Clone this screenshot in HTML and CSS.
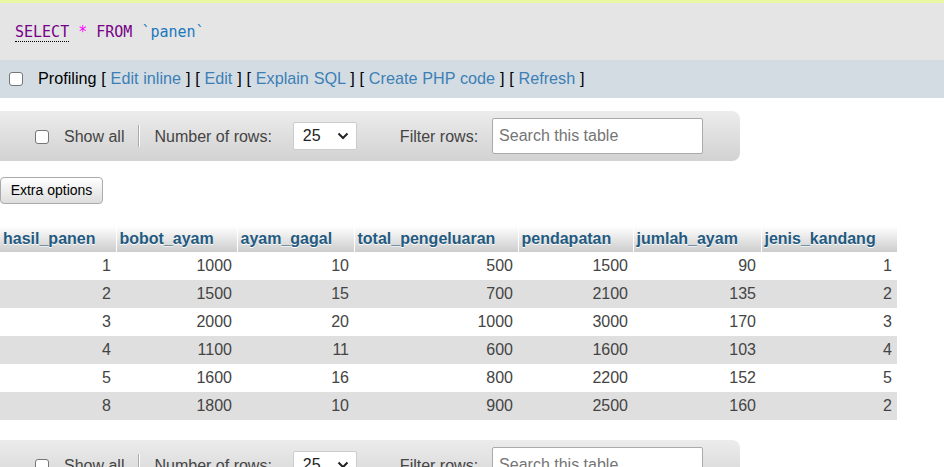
FILE: index.html
```html
<!DOCTYPE html>
<html>
<head>
<meta charset="utf-8">
<link rel="stylesheet" href="styles.css">
</head>
<body>
<div class="topstrip"></div>
<div class="sqlbox">
  <code class="sql"><abbr class="kw kw-abbr">SELECT</abbr> <span class="op">*</span> <span class="kw">FROM</span> <span class="ident">`panen`</span></code>
</div>
<div class="profbar">
  <input type="checkbox" class="cb">
  <span class="proftext"><span class="proflabel">Profiling</span> [ <a class="lnk">Edit inline</a> ] [ <a class="lnk">Edit</a> ] [ <a class="lnk">Explain SQL</a> ] [ <a class="lnk">Create PHP code</a> ] [ <a class="lnk">Refresh</a> ]</span>
</div>

<div class="navbar">
  <label class="showall"><input type="checkbox" class="cb"> <span>Show all</span></label>
  <span class="sep"></span>
  <span class="lbl">Number of rows:</span>
  <div class="select"><span>25</span><svg width="12" height="8" viewBox="0 0 12 8"><path d="M1.5 1.5 L6 6 L10.5 1.5" fill="none" stroke="#222" stroke-width="2"/></svg></div>
  <span class="lbl filterlbl">Filter rows:</span>
  <div class="search">Search this table</div>
</div>

<div class="extra"><button class="btn">Extra options</button></div>

<table class="data">
  <colgroup>
    <col style="width:116px"><col style="width:121px"><col style="width:117px"><col style="width:164px"><col style="width:115px"><col style="width:128px"><col style="width:136px">
  </colgroup>
  <thead>
    <tr><th>hasil_panen</th><th>bobot_ayam</th><th>ayam_gagal</th><th>total_pengeluaran</th><th>pendapatan</th><th>jumlah_ayam</th><th>jenis_kandang</th></tr>
  </thead>
  <tbody>
    <tr><td>1</td><td>1000</td><td>10</td><td>500</td><td>1500</td><td>90</td><td>1</td></tr>
    <tr><td>2</td><td>1500</td><td>15</td><td>700</td><td>2100</td><td>135</td><td>2</td></tr>
    <tr><td>3</td><td>2000</td><td>20</td><td>1000</td><td>3000</td><td>170</td><td>3</td></tr>
    <tr><td>4</td><td>1100</td><td>11</td><td>600</td><td>1600</td><td>103</td><td>4</td></tr>
    <tr><td>5</td><td>1600</td><td>16</td><td>800</td><td>2200</td><td>152</td><td>5</td></tr>
    <tr><td>8</td><td>1800</td><td>10</td><td>900</td><td>2500</td><td>160</td><td>2</td></tr>
  </tbody>
</table>

<div class="navbar bottom">
  <label class="showall"><input type="checkbox" class="cb"> <span>Show all</span></label>
  <span class="sep"></span>
  <span class="lbl">Number of rows:</span>
  <div class="select"><span>25</span><svg width="12" height="8" viewBox="0 0 12 8"><path d="M1.5 1.5 L6 6 L10.5 1.5" fill="none" stroke="#222" stroke-width="2"/></svg></div>
  <span class="lbl filterlbl">Filter rows:</span>
  <div class="search">Search this table</div>
</div>
</body>
</html>
```
FILE: styles.css
```css
html, body {
  margin: 0;
  padding: 0;
  background: #fff;
  font-family: "Liberation Sans", Arial, sans-serif;
  font-size: 16px;
  color: #444;
  overflow: hidden;
}
.topstrip {
  height: 3px;
  background: #e9f7a2;
}
.sqlbox {
  height: 57px;
  background: #e5e5e5;
  display: flex;
  align-items: center;
  padding-left: 15px;
  box-sizing: border-box;
}
.sql {
  font-family: "DejaVu Sans Mono", monospace;
  font-size: 15px;
  letter-spacing: 0;
  margin-top: 1px;
}
.kw { color: #770088; }
.kw-abbr {
  text-decoration: none;
  border-bottom: 1px dotted #000;
}
.op { color: #f0f; }
.ident { color: #1a78bd; }

.profbar {
  height: 38px;
  background: #d3dce3;
  display: flex;
  align-items: center;
  padding-left: 9px;
  color: #000;
}
.proftext {
  white-space: pre;
  color: #000;
  font-size: 16.2px;
  word-spacing: 0.3px;
  margin-bottom: 2px;
}
.cb {
  width: 14px;
  height: 14px;
  margin: 0;
  appearance: none;
  -webkit-appearance: none;
  border: 1px solid #767676;
  border-radius: 3px;
  background: #fff;
  box-sizing: border-box;
  flex: none;
}
.profbar .cb { margin-right: 15px; }
.proflabel { color: #000; }
.lnk { color: #3d7fb5; text-decoration: none; }

.navbar {
  margin-top: 13px;
  width: 740px;
  height: 50px;
  box-sizing: border-box;
  border-radius: 0 8px 8px 0;
  background: linear-gradient(#ececec, #d2d2d2);
  display: flex;
  align-items: center;
  padding-left: 35px;
}
.navbar.bottom { margin-top: 20px; }
.showall {
  display: flex;
  align-items: center;
  color: #444;
  padding-top: 1px;
}
.showall .cb { margin-right: 15px; }
.sep {
  width: 1px;
  height: 22px;
  background: #aaa;
  border-right: 1px solid #fff;
  margin: 0 14px 0 14px;
}
.lbl { color: #444; padding-top: 1px; }
.select {
  margin-left: 21px;
  width: 64px;
  height: 28px;
  box-sizing: border-box;
  background: #fff;
  border: 1px solid #ccc;
  border-radius: 2px;
  display: flex;
  align-items: center;
  justify-content: space-between;
  padding: 0 7px 0 9px;
  color: #222;
}
.filterlbl { margin-left: 43px; }
.search {
  margin-left: 14px;
  width: 211px;
  height: 36px;
  box-sizing: border-box;
  background: #fff;
  border: 1px solid #aaa;
  border-radius: 2px;
  display: flex;
  align-items: center;
  padding-left: 6px;
  color: #757575;
}

.extra { margin-top: 16px; }
.btn {
  font-family: "Liberation Sans", Arial, sans-serif;
  font-size: 14px;
  color: #000;
  height: 27px;
  width: 103px;
  padding: 0 0 1px 0;
  border: 1px solid #aaa;
  border-radius: 4px;
  background: linear-gradient(#fff, #ddd);
  display: block;
}

.data {
  margin-top: 22px;
  border-collapse: collapse;
  table-layout: fixed;
  width: 897px;
}
.data th {
  height: 26px;
  padding: 0 4px 0 3px;
  text-align: left;
  font-weight: bold;
  color: #235a81;
  text-shadow: 0 1px 0 #fff;
  background: linear-gradient(#fff, #ccc);
  border-right: 1px solid #fff;
  box-sizing: border-box;
  white-space: nowrap;
}
.data th:last-child { border-right: none; }
.data td {
  height: 28px;
  padding: 0 5px 0 4px;
  text-align: right;
  color: #444;
  box-sizing: border-box;
}
.data tbody tr:nth-child(even) td { background: #dfdfdf; }
```
